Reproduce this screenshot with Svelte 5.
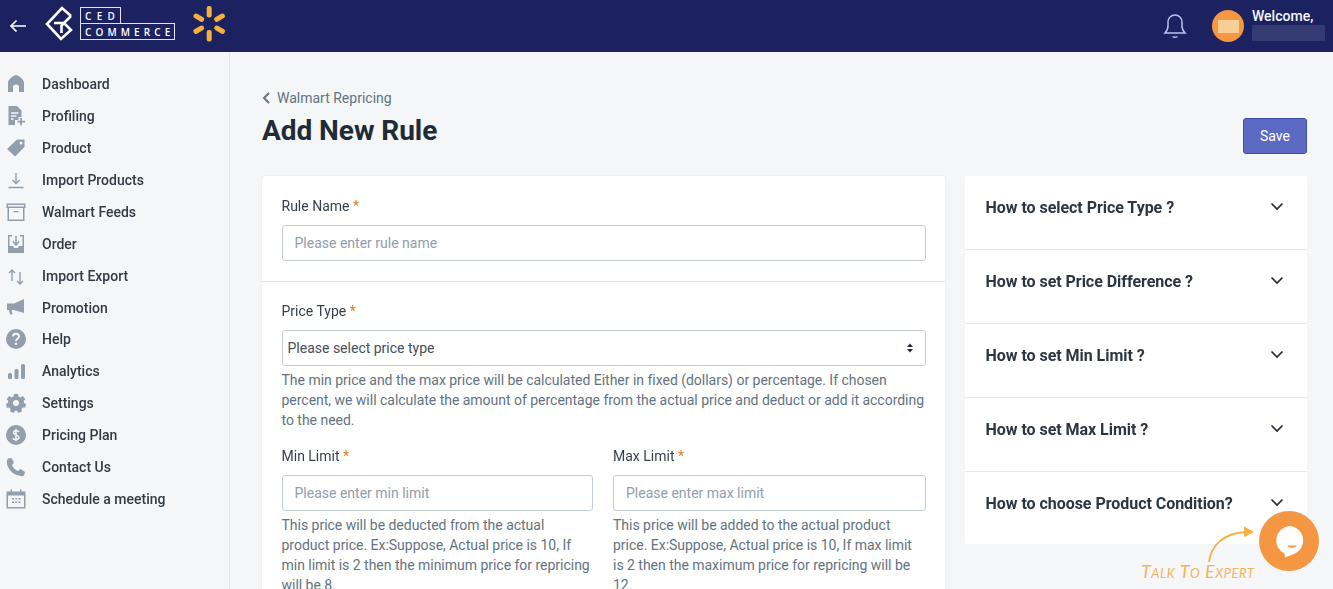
<script>
	const nav = [
		{ label: "Dashboard", icon: "home" },
		{ label: "Profiling", icon: "profile" },
		{ label: "Product", icon: "tag" },
		{ label: "Import Products", icon: "download" },
		{ label: "Walmart Feeds", icon: "archive" },
		{ label: "Order", icon: "inbox" },
		{ label: "Import Export", icon: "updown" },
		{ label: "Promotion", icon: "megaphone" },
		{ label: "Help", icon: "help" },
		{ label: "Analytics", icon: "bars" },
		{ label: "Settings", icon: "gear" },
		{ label: "Pricing Plan", icon: "dollar" },
		{ label: "Contact Us", icon: "phone" },
		{ label: "Schedule a meeting", icon: "calendar" },
	];

	const faqs = [
		"How to select Price Type ?",
		"How to set Price Difference ?",
		"How to set Min Limit ?",
		"How to set Max Limit ?",
		"How to choose Product Condition?",
	];
</script>

<div class="page">
	<header class="topbar">
		<div class="brand">
			<svg class="back" width="18" height="14" viewBox="0 0 18 14" fill="none" stroke="#fff" stroke-width="1.7">
				<path d="M17 7H2M7.500 1.500 2 7l5.500 5.500" />
			</svg>
			<svg class="mark" width="30" height="36" viewBox="0 0 30 36" fill="none" stroke="#fff" stroke-width="2.600">
				<path d="M26 10 17 2 2 18l14 15 10-9-7-7H9" />
				<path d="M26 10 16.500 19.500V27" />
			</svg>
			<div class="wordmark">
				<span class="ced">CED</span>
				<span class="commerce">COMMERCE</span>
			</div>
			<svg class="spark" width="34" height="36" viewBox="0 0 34 36" fill="#f5b041">
				<rect x="14.700" y="0" width="5" height="11.500" rx="2.200" />
				<rect x="14.700" y="24" width="5" height="11.500" rx="2.200" />
				<rect x="14.700" y="0" width="5" height="11.500" rx="2.200" transform="rotate(60 17.200 17.700)" />
				<rect x="14.700" y="24" width="5" height="11.500" rx="2.200" transform="rotate(60 17.200 17.700)" />
				<rect x="14.700" y="0" width="5" height="11.500" rx="2.200" transform="rotate(-60 17.200 17.700)" />
				<rect x="14.700" y="24" width="5" height="11.500" rx="2.200" transform="rotate(-60 17.200 17.700)" />
			</svg>
		</div>
		<div class="account">
			<svg width="24" height="26" viewBox="0 0 24 26" fill="none" stroke="#b9c3ea" stroke-width="1.500">
				<path d="M2 20c2-2 3-4 3-7V9a7 7 0 0 1 14 0v4c0 3 1 5 3 7z" />
				<path d="M9.500 23.500c1.500 1 3.500 1 5 0" />
			</svg>
			<div class="avatar"><span></span></div>
			<div class="who">
				<span>Welcome,</span>
				<i></i>
			</div>
		</div>
	</header>

	<div class="body">
		<aside class="sidebar">
			{#each nav as item}
				<div class="nav-item">
					<svg width="20" height="20" viewBox="0 0 20 20" fill="#919eab">
						{#if item.icon === "home"}
							<path d="M2 18V8.500C2 6 6 2 10 1c4 1 8 5 8 7.500V18h-5v-5c0-1.500-1-2.500-3-2.500S7 11.500 7 13v5z" />
						{:else if item.icon === "profile"}
							<path d="M2.500 0h8.500l4.500 4.500V11h-3v3H9v5H2.500z" />
							<path d="M5 7h7.500M5 10h5.500M5 13h2.500" stroke="#f4f6f8" stroke-width="1.300" />
							<path d="M15 12v7.500M11.500 15.700h7.500" stroke="#919eab" stroke-width="1.700" />
						{:else if item.icon === "tag"}
							<path d="M11 1.500h7.500V9l-9.500 9.500L1 11zM15 3.500a1.500 1.500 0 1 0 0 3 1.500 1.500 0 0 0 0-3z" fill-rule="evenodd" />
						{:else if item.icon === "download"}
							<path d="M10 3v10M6.500 10 10 13.500 13.500 10M2.500 17.500h15" fill="none" stroke="#919eab" stroke-width="1.300" />
						{:else if item.icon === "archive"}
							<path d="M.5 1.500h19v4.500h-1v13h-17V6h-1zM2 3v1.500h16V3zM3 6v11.500h14V6zM7.500 9h5v1.300h-5z" fill-rule="evenodd" />
						{:else if item.icon === "inbox"}
							<path d="M2 1h4v1.500H3.500V12H7l1 2h4l1-2h3.500V2.500H14V1h4v18H2z" />
							<path d="M10 2v8.500M6.800 7.500 10 10.800l3.200-3.300" fill="none" stroke="#919eab" stroke-width="1.500" />
						{:else if item.icon === "updown"}
							<path d="M6 15V4M3 7l3-3 3 3M14 6v12M11 15l3 3 3-3" fill="none" stroke="#919eab" stroke-width="1.400" />
						{:else if item.icon === "megaphone"}
							<path d="M1 5.500h7L18 1v14L8 12H5.500l1 4.500H4L2.800 12H1z" />
						{:else if item.icon === "help"}
							<circle cx="10" cy="10" r="10" />
							<path d="M7 7.500C7 5.500 8.500 4.800 10 4.800s3 1 3 2.600c0 2.300-3 2.200-3 4.600" fill="none" stroke="#f4f6f8" stroke-width="1.900" />
							<circle cx="10" cy="14.800" r="1.200" fill="#f4f6f8" />
						{:else if item.icon === "bars"}
							<rect x="2" y="12" width="4" height="6" rx="1.500" />
							<rect x="8.500" y="8" width="4" height="10" rx="1.500" />
							<rect x="15" y="3" width="4" height="15" rx="1.500" />
						{:else if item.icon === "gear"}
							<path d="M8 1h4l.6 2.600 1.800.8L16.700 3l2.600 3-1.600 2.100.3 1.900 2 1-.8 3.600-2.500-.1-1.300 1.500.5 2.500-3.500 1.400-1.400-2.100h-2L7.600 20l-3.500-1.400.5-2.500-1.300-1.500-2.500.1L0 11l2-1 .3-1.900L.7 6l2.600-3 2.300 1.400 1.800-.8zM10 7a3 3 0 1 0 0 6 3 3 0 0 0 0-6z" fill-rule="evenodd" />
						{:else if item.icon === "dollar"}
							<circle cx="10" cy="10" r="10" />
							<path d="M13 7c-.5-1.300-5.500-2-5.500.6S13 9.500 13 12.300 7.500 15 7 13.200M10 3.800v12.400" fill="none" stroke="#f4f6f8" stroke-width="1.500" />
						{:else if item.icon === "phone"}
							<path d="M2 1.500 5.500 1 8 5.500 6 8c.8 2.500 3 5 6 6l2.500-2 4.500 3-1 3.500c-1 1-3 .8-5 0C7.500 18 2.500 13 1 7 .7 5 1 2.500 2 1.500z" />
						{:else if item.icon === "calendar"}
							<path d="M.5 2.500h4V.5H6v2h8v-2h1.500v2h4v17H.5zM2 6.500V18h16V6.500zM6 9h2v1.500H6zM9.200 9h2v1.500h-2zM12.400 9h2v1.500h-2zM6 12.500h2V14H6zM9.200 12.500h2V14h-2zM12.400 12.500h2V14h-2z" fill-rule="evenodd" />
						{/if}
					</svg>
					<span>{item.label}</span>
				</div>
			{/each}
		</aside>

		<main class="content">
			<div class="crumb">
				<svg width="9" height="12" viewBox="0 0 9 12" fill="none" stroke="#637381" stroke-width="2"><path d="M7 1 2 6l5 5" /></svg>
				<span>Walmart Repricing</span>
			</div>
			<div class="title-row">
				<h1>Add New Rule</h1>
				<button class="save">Save</button>
			</div>

			<div class="columns">
				<section class="form-card">
					<div class="section first">
						<span class="label">Rule Name <b>*</b></span>
						<div class="field">Please enter rule name</div>
					</div>
					<div class="section">
						<span class="label">Price Type <b>*</b></span>
						<div class="field select">
							<span>Please select price type</span>
							<svg width="8" height="12" viewBox="0 0 8 12" fill="#212b36"><path d="M4 1.500 7 5H1zM4 10.500 1 7h6z" /></svg>
						</div>
						<p class="help">The min price and the max price will be calculated Either in fixed (dollars) or percentage. If chosen percent, we will calculate the amount of percentage from the actual price and deduct or add it according to the need.</p>
						<div class="limits">
							<div>
								<span class="label">Min Limit <b>*</b></span>
								<div class="field">Please enter min limit</div>
								<p class="help">This price will be deducted from the actual product price. Ex:Suppose, Actual price is 10, If min limit is 2 then the minimum price for repricing will be 8.</p>
							</div>
							<div>
								<span class="label">Max Limit <b>*</b></span>
								<div class="field">Please enter max limit</div>
								<p class="help">This price will be added to the actual product price. Ex:Suppose, Actual price is 10, If max limit is 2 then the maximum price for repricing will be 12.</p>
							</div>
						</div>
					</div>
				</section>

				<section class="faq-card">
					{#each faqs as faq}
						<div class="faq">
							<span>{faq}</span>
							<svg width="14" height="9" viewBox="0 0 14 9" fill="none" stroke="#212b36" stroke-width="1.700"><path d="m1.500 1.500 5.500 5.500 5.500-5.500" /></svg>
						</div>
					{/each}
				</section>
			</div>
		</main>
	</div>

	<div class="chat">
		<svg width="190" height="95" viewBox="0 0 190 95" fill="none">
			<path d="M69 72C71 56 83 43 106 42" stroke="#f5b041" stroke-width="1.800" />
			<path d="M104 36.500 114 42l-10 5z" fill="#f5b041" />
			<text x="1" y="88" textLength="113" class="talk">Talk To Expert</text>
			<circle cx="149" cy="51" r="30" fill="#f49642" />
			<path d="M149 36a14.500 14.500 0 0 1 5 28L145 67.500l-.5-4A14.500 14.500 0 0 1 149 36z" fill="#fff" />
			<path d="M147.500 55.500h9c-1 3-8 3-9 0z" fill="#f49642" />
		</svg>
	</div>
</div>

<style>
	:global(body) {
		margin: 0;
		background: #f4f6f8;
		font-family: Roboto, "Liberation Sans", sans-serif;
		overflow: hidden;
	}

	.page {
		height: 589px;
		overflow: hidden;
		position: relative;
		background: #f4f6f8;
	}

	.topbar {
		height: 52px;
		background: #1c2260;
		display: flex;
		align-items: center;
		justify-content: space-between;
	}

	.brand {
		display: flex;
		align-items: center;
	}

	.back {
		margin-left: 9px;
	}

	.mark {
		margin-left: 18px;
		margin-top: -4px;
	}

	.wordmark {
		display: flex;
		flex-direction: column;
		align-items: flex-start;
		margin: -5px 0 0 5px;
		color: #fff;
		font-family: "Open Sans", sans-serif;
		font-size: 10px;
		font-weight: 600;
		line-height: 16px;
	}

	.ced {
		border: 1px solid #dfe3f2;
		border-bottom: 0;
		height: 16px;
		width: 41px;
		letter-spacing: 5.300px;
		padding-left: 4px;
		box-sizing: border-box;
		white-space: nowrap;
		overflow: hidden;
	}

	.commerce {
		border: 1px solid #dfe3f2;
		height: 17px;
		width: 95px;
		letter-spacing: 4.100px;
		padding-left: 4px;
		box-sizing: border-box;
		white-space: nowrap;
		overflow: hidden;
	}

	.spark {
		margin: -4px 0 0 17px;
	}

	.account {
		display: flex;
		align-items: center;
		margin-right: 8px;
	}

	.avatar {
		width: 32px;
		height: 32px;
		margin-left: 25px;
		border-radius: 50%;
		background: #f49642;
		display: flex;
		align-items: center;
		justify-content: center;
	}

	.avatar span {
		width: 21px;
		height: 13px;
		background: #f5cf94;
		filter: blur(0.5px);
	}

	.who {
		width: 73px;
		margin-left: 8px;
		color: #f4f6f8;
		font-size: 14px;
		font-weight: 500;
		line-height: 16px;
		display: flex;
		flex-direction: column;
		margin-top: -3px;
	}

	.who i {
		display: block;
		height: 16px;
		margin-top: 1px;
		background: #343a72;
	}

	.body {
		display: flex;
		height: 537px;
	}

	.sidebar {
		width: 229px;
		flex: none;
		border-right: 1px solid #e3e6ea;
		padding-top: 16px;
		box-sizing: content-box;
	}

	.nav-item {
		height: 31.95px;
		display: flex;
		align-items: center;
		padding-left: 6px;
		color: #212b36;
		font-size: 14px;
		font-weight: 500;
	}

	.nav-item span {
		margin-left: 16px;
		opacity: 0.92;
	}

	.content {
		flex: 1;
		padding: 37px 26px 0 32px;
		min-width: 0;
	}

	.crumb {
		display: flex;
		align-items: center;
		gap: 6px;
		height: 18px;
		color: #637381;
		font-size: 14px;
	}

	.title-row {
		display: flex;
		justify-content: space-between;
		align-items: flex-start;
		height: 69px;
	}

	h1 {
		margin: 8px 0 0;
		color: #212b36;
		font-size: 28px;
		line-height: 32px;
		font-weight: 700;
		letter-spacing: -0.05px;
	}

	.save {
		margin-top: 11px;
		width: 64px;
		height: 36px;
		border: 1px solid #3f4eae;
		border-radius: 3px;
		background: #5c6ac4;
		color: #fff;
		font: 400 14px Roboto, sans-serif;
	}

	.columns {
		display: flex;
		gap: 20px;
		align-items: flex-start;
	}

	.form-card {
		width: 683px;
		flex: none;
		background: #fff;
		border-radius: 3px;
		box-shadow: 0 0 2px rgba(63, 63, 68, 0.12);
	}

	.section {
		padding: 19px 19.5px 0;
	}

	.section.first {
		padding-top: 20px;
		border-bottom: 1px solid #dfe3e8;
		box-sizing: border-box;
		height: 106px;
	}

	.label {
		display: block;
		height: 19px;
		line-height: 20px;
		color: #212b36;
		font-size: 14px;
		opacity: 0.9;
	}

	.label b {
		color: #de6a10;
		font-weight: 400;
	}

	.field {
		margin-top: 10px;
		height: 36px;
		box-sizing: border-box;
		border: 1px solid #c4cdd5;
		border-radius: 3px;
		padding: 0 12px;
		display: flex;
		align-items: center;
		color: #919eab;
		font-size: 14px;
	}

	.select {
		justify-content: space-between;
		padding: 0 11px 0 5px;
		color: #454f5b;
	}

	.help {
		margin: 4px 0 0;
		color: #637381;
		font-size: 14px;
		line-height: 20px;
		letter-spacing: -0.02px;
	}

	.limits {
		display: grid;
		grid-template-columns: 311.5px 312.5px;
		gap: 20px;
		margin-top: 16px;
	}

	.faq-card {
		width: 342px;
		flex: none;
		background: #fff;
		border-radius: 3px;
	}

	.faq {
		height: 73px;
		box-sizing: content-box;
		border-bottom: 1px solid #e6e9ec;
		padding: 0 21px 0 20.5px;
		display: flex;
		justify-content: space-between;
		color: #212b36;
		font-size: 16px;
		font-weight: 700;
	}

	.faq:last-child {
		border-bottom: 0;
		height: 72px;
	}

	.faq span {
		margin-top: 22px;
		line-height: 19px;
		letter-spacing: -0.04px;
		opacity: 0.95;
	}

	.faq svg {
		margin: 26px 2px 0 0;
	}

	.chat {
		position: absolute;
		left: 1140px;
		top: 490px;
		width: 190px;
		height: 95px;
	}

	.talk {
		font-family: Lato, sans-serif;
		font-size: 18px;
		font-weight: 400;
		font-style: italic;
		font-variant: small-caps;
		fill: #f4b35c;
	}
</style>
